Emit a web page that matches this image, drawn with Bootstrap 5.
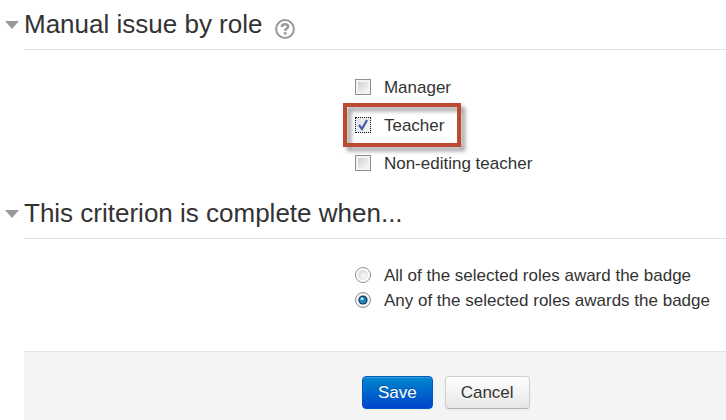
<!DOCTYPE html>
<html lang="en">
<head>
<meta charset="utf-8">
<meta name="viewport" content="width=device-width, initial-scale=1">
<title>Badge criteria</title>
<link rel="stylesheet" href="https://cdn.jsdelivr.net/npm/bootstrap@5.3.0/dist/css/bootstrap.min.css">
<style>
  body { font-family: "Liberation Sans", Arial, sans-serif; font-size: 17px; line-height: 24px; color: #333; background: #fff; }
  .criteria-form { padding-left: 24px; }
  .section-title { font-size: 26px; line-height: 49px; font-weight: 400; color: #333; border-bottom: 1px solid #e3e3e3; }
  .toggle-btn { margin-left: -20px; padding: 0 5px 0 0; border: 0; background: none; color: inherit; line-height: inherit; text-align: left; }
  .help-btn { padding: 9px 0 0; margin-left: 8px; border: 0; background: none; line-height: 0; }
  .option-list { padding-left: 47%; }
  .roles { padding-top: 18px; padding-bottom: 7px; }
  .rules { padding-top: 24px; padding-bottom: 38px; }
  .choice { gap: 13px; height: 38px; margin-left: 1px; padding-top: 1px; }
  .rules .choice { height: 25px; }
  .choice input { appearance: none; width: 16px; height: 16px; margin: 0 0 2px; flex: none; }
  .choice input[type=checkbox] { border: 1px solid #8e8f8f; background: linear-gradient(135deg, #cfd2d6, #f6f6f6) content-box, #f4f4f4; padding: 2px; }
  .choice input[type=checkbox]:checked { border: 1px dotted #111; background: url("data:image/svg+xml,%3Csvg xmlns='http://www.w3.org/2000/svg' viewBox='0 0 14 14'%3E%3Cpath d='M3 7l3 4 5-9' fill='none' stroke='%234459a4' stroke-width='2.2'/%3E%3C/svg%3E") center / 14px 14px no-repeat, linear-gradient(135deg, #dfe2e8, #f8f8f8); }
  .choice input[type=radio] { border: 1px solid #8e8f8f; border-radius: 50%; background: radial-gradient(circle at 60% 60%, #f4f4f4 20%, #d2d5d8 80%) content-box, #fff; padding: 2px; }
  .choice input[type=radio]:checked { background: url("data:image/svg+xml,%3Csvg xmlns='http://www.w3.org/2000/svg' viewBox='0 0 14 14'%3E%3Ccircle cx='7' cy='7' r='4.6' fill='%23123f63'/%3E%3Ccircle cx='7' cy='7.3' r='3.2' fill='%231f86bb'/%3E%3Ccircle cx='6' cy='5.7' r='1.5' fill='%23b4ecff'/%3E%3C/svg%3E") center / 14px 14px no-repeat, #f1f2f3; }
  .highlighted { position: relative; }
  .highlighted::after { content: ""; position: absolute; inset: -3px -17px -3px -12px; border: 4px solid #bd4932; filter: drop-shadow(4px 4px 2px #0006); pointer-events: none; }
  .form-footer { background: #f4f4f4; border-top: 1px solid #e3e3e3; padding-top: 24px; padding-bottom: 11px; }
  .form-footer .option-list { gap: 12px; }
  .action-btn { margin: 0; height: 33px; padding: 0 15px; font-size: 17px; line-height: 30px; border-radius: 4px; box-shadow: inset 0 1px 0 #fff3, 0 1px 2px #0000000d; }
  .save-btn { margin-left: 8px; color: #fff; text-shadow: 0 -1px 0 #00000040; background: linear-gradient(#0088cc, #0044cc); border: 1px solid #0058c4; }
  .cancel-btn { color: #333; text-shadow: 0 1px 1px #ffffffbf; background: linear-gradient(#fff, #e6e6e6); border: 1px solid #d0d0d0; border-bottom-color: #b3b3b3; }
</style>
<script src="https://cdn.jsdelivr.net/npm/bootstrap@5.3.0/dist/js/bootstrap.bundle.min.js"></script>
</head>
<body>
<form class="criteria-form">
  <section>
    <h2 class="section-title d-flex align-items-center mb-0">
      <button type="button" class="toggle-btn d-flex align-items-center" aria-expanded="true">
        <svg class="me-1" width="16" height="8" viewBox="0 0 16 8" aria-hidden="true"><path d="M1 0h14L8 8z" fill="#999"/></svg>
        Manual issue by role
      </button>
      <button type="button" class="help-btn" aria-label="Help with manual issue by role">
        <svg width="20" height="20" viewBox="0 0 20 20" fill="none" stroke="#999" aria-hidden="true"><circle cx="10" cy="10" r="8.900" stroke-width="2"/><path d="M6.700 8Q6.900 5.200 10 5.200T13.200 7.600C13.200 9.700 10.200 9.400 10.200 12" stroke-width="2.500"/><path d="M10.200 13.200v2.400" stroke-width="2.800"/></svg>
      </button>
    </h2>
    <div class="option-list roles d-flex flex-column align-items-start">
      <label class="choice d-flex align-items-center"><input type="checkbox" name="manager">Manager</label>
      <label class="choice highlighted d-flex align-items-center"><input type="checkbox" name="teacher" checked>Teacher</label>
      <label class="choice d-flex align-items-center"><input type="checkbox" name="nonediting">Non-editing teacher</label>
    </div>
  </section>
  <section>
    <h2 class="section-title d-flex align-items-center mb-0">
      <button type="button" class="toggle-btn d-flex align-items-center" aria-expanded="true">
        <svg class="me-1" width="16" height="8" viewBox="0 0 16 8" aria-hidden="true"><path d="M1 0h14L8 8z" fill="#999"/></svg>
        This criterion is complete when...
      </button>
    </h2>
    <div class="option-list rules d-flex flex-column align-items-start">
      <label class="choice d-flex align-items-center"><input type="radio" name="rule" value="all">All of the selected roles award the badge</label>
      <label class="choice d-flex align-items-center"><input type="radio" name="rule" value="any" checked>Any of the selected roles awards the badge</label>
    </div>
  </section>
  <footer class="form-footer">
    <div class="option-list d-flex">
      <button type="submit" class="action-btn save-btn">Save</button>
      <button type="button" class="action-btn cancel-btn">Cancel</button>
    </div>
  </footer>
</form>
</body>
</html>
